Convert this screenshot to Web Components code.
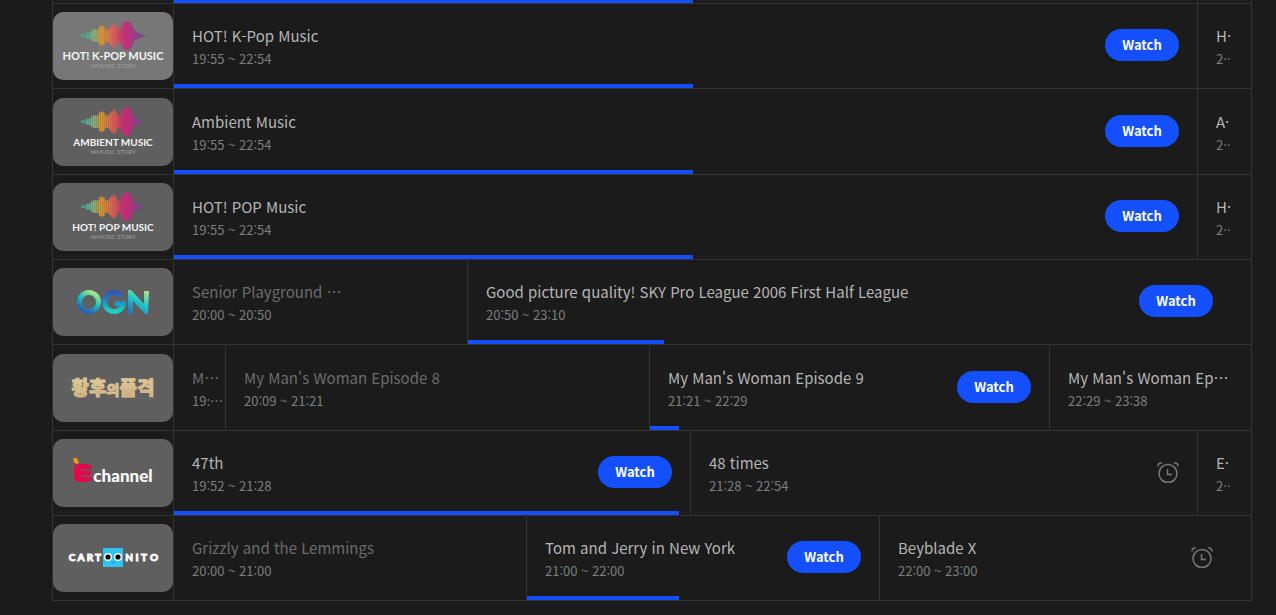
<!DOCTYPE html>
<html lang="ko">
<head>
<meta charset="utf-8">
<title>TV guide</title>
<style>
  body {
    margin: 0;
    padding: 0 24px 12px 52px;
    background: #1b1b1b;
    color: #b5b5b5;
    font-family: "Noto Sans CJK KR", "Noto Sans", sans-serif;
  }
</style>
</head>
<body>
<tv-guide>
  <tv-row peek>
    <tv-show span="1024" progress="507"></tv-show>
    <tv-show span="53"></tv-show>
  </tv-row>
  <tv-row>
    <channel-logo slot="logo" kind="wave" name="HOT! K-POP MUSIC" size="11" light></channel-logo>
    <tv-show span="1024" progress="507" name="HOT! K-Pop Music" time="19:55 ~ 22:54" action="watch"></tv-show>
    <tv-show span="53" name="H·" time="2··"></tv-show>
  </tv-row>
  <tv-row>
    <channel-logo slot="logo" kind="wave" name="AMBIENT MUSIC" size="10"></channel-logo>
    <tv-show span="1024" progress="507" name="Ambient Music" time="19:55 ~ 22:54" action="watch"></tv-show>
    <tv-show span="53" name="A·" time="2··"></tv-show>
  </tv-row>
  <tv-row>
    <channel-logo slot="logo" kind="wave" name="HOT! POP MUSIC" size="10"></channel-logo>
    <tv-show span="1024" progress="507" name="HOT! POP Music" time="19:55 ~ 22:54" action="watch"></tv-show>
    <tv-show span="53" name="H·" time="2··"></tv-show>
  </tv-row>
  <tv-row>
    <channel-logo slot="logo" kind="ogn"></channel-logo>
    <tv-show span="294" name="Senior Playground …" time="20:00 ~ 20:50" past></tv-show>
    <tv-show span="783" progress="250" name="Good picture quality! SKY Pro League 2006 First Half League" time="20:50 ~ 23:10" action="watch" open></tv-show>
  </tv-row>
  <tv-row>
    <channel-logo slot="logo" kind="empress"></channel-logo>
    <tv-show span="52" name="M…" time="19:…" past></tv-show>
    <tv-show span="424" name="My Man's Woman Episode 8" time="20:09 ~ 21:21" past></tv-show>
    <tv-show span="400" progress="73" name="My Man's Woman Episode 9" time="21:21 ~ 22:29" action="watch"></tv-show>
    <tv-show span="201" name="My Man's Woman Ep…" time="22:29 ~ 23:38"></tv-show>
  </tv-row>
  <tv-row>
    <channel-logo slot="logo" kind="echannel"></channel-logo>
    <tv-show span="517" progress="978" name="47th" time="19:52 ~ 21:28" action="watch"></tv-show>
    <tv-show span="507" name="48 times" time="21:28 ~ 22:54" action="alarm"></tv-show>
    <tv-show span="53" name="E·" time="2··"></tv-show>
  </tv-row>
  <tv-row>
    <channel-logo slot="logo" kind="cartoonito"></channel-logo>
    <tv-show span="353" name="Grizzly and the Lemmings" time="20:00 ~ 21:00" past></tv-show>
    <tv-show span="353" progress="431" name="Tom and Jerry in New York" time="21:00 ~ 22:00" action="watch"></tv-show>
    <tv-show span="371" name="Beyblade X" time="22:00 ~ 23:00" action="alarm" open></tv-show>
  </tv-row>
</tv-guide>

<script>
const lineColor = '#333333';
const accentColor = '#1450ff';

// waveform bars: x, half height, color
const waveBars = [
  [28, 1, '#4fa590'], [30, 1, '#4fa590'], [32, 2, '#4fa590'], [34, 3, '#55ab92'], [36, 3, '#62ad90'],
  [38, 5, '#7aae8a'], [40, 6, '#86ab80'], [42, 6, '#93a678'], [44, 6, '#b09d53'],
  [46, 9, '#cf9a34'], [48, 10, '#dc9526'], [50, 9, '#dd8b2c'], [52, 6, '#d98338'],
  [54, 6, '#d87b42'], [56, 8, '#dd7048'], [58, 10, '#e1624e'], [60, 12, '#e45752'], [62, 10, '#df5058'],
  [64, 6, '#d54660'], [66, 6, '#d03c68'], [68, 10, '#d0316e'], [70, 13, '#d02a74'],
  [72, 14, '#d12578'], [74, 14, '#cb257b'], [76, 13, '#c2287d'], [78, 10, '#b42d80'], [80, 6, '#a53283'],
  [82, 4, '#943887'], [84, 3, '#853f89'], [86, 2, '#7c4688'], [88, 1, '#755085'], [90, 1, '#6f5583'],
];

const logos = {
  wave: (name, size) => `
    ${waveBars.map(([x, h, c]) => `
      <rect x="${x}" y="${24 - h}" width="2" height="${h * 2}" fill="${c}" opacity=".5"/>
      <rect x="${x}" y="${23 - h}" width="1.4" height="${h * 2 + 1}" rx=".7" fill="${c}"/>`).join('')}
    <text x="60" y="48" font-family="Lato" font-weight="700" font-size="${size}" fill="#f5f5f5">${name}</text>
    <text x="60" y="56" font-family="Lato" font-size="6" fill="#a0a0a0">WMUSIC STORY</text>`,
  ogn: () => `
    <defs>
      <linearGradient id="o" x1=".8" y1="0" x2=".3" y2="1"><stop offset="0" stop-color="#b5e583"/><stop offset=".45" stop-color="#1bc4c5"/><stop offset="1" stop-color="#2b5db5"/></linearGradient>
      <linearGradient id="g" x1=".5" y1="0" x2=".5" y2="1"><stop offset="0" stop-color="#2d57b2"/><stop offset=".45" stop-color="#1d8bc3"/><stop offset="1" stop-color="#19d4c5"/></linearGradient>
      <linearGradient id="n" x1=".3" y1="1" x2=".8" y2="0"><stop offset="0" stop-color="#2d75c2"/><stop offset=".5" stop-color="#1ec9c9"/><stop offset="1" stop-color="#b5e582"/></linearGradient>
    </defs>
    <g fill="none" stroke-width="5">
      <circle cx="36" cy="34" r="9.5" stroke="url(#o)"/>
      <path d="M68.500 28a9.500 9.500 0 1 0 2 7.500H62" stroke="url(#g)"/>
    </g>
    <path d="M75 46V22h3l13 14V23h5l-1 23h-3L80 33v13z" fill="url(#n)"/>`,
  empress: () => `
    <defs><linearGradient id="k" x1="0" y1="0" x2="0" y2="1"><stop offset="0" stop-color="#e3cf9f"/><stop offset="1" stop-color="#cda874"/></linearGradient></defs>
    <text x="60" y="41" font-family="Noto Sans CJK KR" font-weight="900" font-size="19" fill="url(#k)" stroke="#dcc394" stroke-width=".8">황후<tspan font-size="14">의</tspan>품격</text>`,
  echannel: () => `
    <path d="M20 20q3-3 5 1l1 3-3 1q-3-2-3-5z" fill="#f39a12"/>
    <rect x="21" y="25" width="17" height="18" rx="5" fill="#e5074c"/>
    <path d="M28 31h10M28 37h10" stroke="#5f5f5f" stroke-width="1.500"/>
    <path d="M38 26v4M38 38v5" stroke="#e5074c"/>
    <text x="70" y="43" font-family="Lato" font-weight="900" font-size="17" fill="#ffffff">channel</text>`,
  cartoonito: () => `
    <rect x="50" y="24" width="20" height="19" fill="#2fc4f0"/>
    <circle cx="55" cy="33" r="4" fill="#fff"/><circle cx="65" cy="33" r="4" fill="#fff"/>
    <circle cx="55" cy="33" r="2.600" fill="#000"/><circle cx="65" cy="33" r="2.600" fill="#000"/>
    <path d="M58 38q2 2 4 0" fill="none" stroke="#2a7fd0"/>
    <g font-family="Lato" font-weight="900" font-size="10" fill="#fff" stroke="#fff" stroke-width=".8">
      <text x="19 28 37 45" y="37">CART</text><text x="76 84 91 101" y="37">NITO</text>
    </g>`,
};

class TvGuide extends HTMLElement {
  constructor() {
    super();
    this.attachShadow({ mode: 'open' }).innerHTML = `
      <style>
        :host {
          display: block;
          border: 1px solid ${lineColor};
          border-width: 0 1px;
        }
        ::slotted(tv-row) { height: 84px; }
        /* three rows share 256px */
        ::slotted(tv-row:nth-child(3n)) { height: 85px; }
        ::slotted(tv-row[peek]) { height: 3px; }
      </style>
      <slot></slot>
    `;
  }
}

class TvRow extends HTMLElement {
  connectedCallback() {
    if (this.shadowRoot) return;
    this.attachShadow({ mode: 'open' }).innerHTML = `
      <style>
        :host {
          display: flex;
          border-bottom: 1px solid ${lineColor};
        }
        .logo {
          flex: none;
          display: flex;
          align-items: flex-end;
          width: 120px;
          padding-bottom: 8px;
          border-right: 1px solid ${lineColor};
        }
        :host([peek]) .logo { padding: 0; }
        .shows {
          flex: 1;
          display: grid;
          min-width: 0;
        }
      </style>
      <div class="logo"><slot name="logo"></slot></div>
      <div class="shows"><slot></slot></div>
    `;
    this._setColumns();
    this.shadowRoot.querySelector('.shows slot').addEventListener('slotchange', () => this._setColumns());
  }

  // one column per show, as wide as its share of the timeline
  _setColumns() {
    const shows = [...this.querySelectorAll('tv-show')];
    this.shadowRoot.querySelector('.shows').style.gridTemplateColumns =
      shows.map((show) => `minmax(0, ${show.getAttribute('span')}fr)`).join(' ');
  }
}

class ChannelLogo extends HTMLElement {
  connectedCallback() {
    if (this.shadowRoot) return;
    const draw = logos[this.getAttribute('kind')];
    this.attachShadow({ mode: 'open' }).innerHTML = `
      <style>
        :host {
          display: block;
          height: 68px;
          border-radius: 10px;
          background: #5f5f5f;
        }
        :host([light]) { background: #777777; }
        svg { display: block; }
        text { text-anchor: middle; }
      </style>
      <svg width="120" height="68" viewBox="0 0 120 68">${draw(this.getAttribute('name'), this.getAttribute('size'))}</svg>
    `;
  }
}

class TvShow extends HTMLElement {
  connectedCallback() {
    if (this.shadowRoot) return;
    const name = this.getAttribute('name');
    const progress = this.getAttribute('progress');
    this.attachShadow({ mode: 'open' }).innerHTML = `
      <style>
        :host {
          position: relative;
          display: flex;
          align-items: center;
          min-width: 0;
          padding: 0 18px 2px 18px;
          border-right: 1px solid ${lineColor};
        }
        :host(:last-child) { border-right: 0; }
        :host([past]) { padding-right: 0; }
        :host([open]) { padding-right: 38px; }
        :host(:not([name])) { padding: 0; }
        .info {
          flex: 1;
          min-width: 0;
          padding-top: 4px;
        }
        .name, .time {
          overflow: hidden;
          white-space: nowrap;
          text-overflow: ellipsis;
        }
        .name {
          font-size: 15px;
          line-height: 24px;
        }
        .time {
          font-size: 13px;
          line-height: 22px;
          color: #7d7d7d;
        }
        :host([past]) .name { color: #6b6b6b; }
        .bar {
          position: absolute;
          left: 0;
          bottom: 0;
          height: 4px;
          background: ${accentColor};
        }
      </style>
      ${name ? `<div class="info"><div class="name">${name}</div><div class="time">${this.getAttribute('time')}</div></div>` : ''}
      ${this._action()}
      ${progress ? `<div class="bar" style="width: ${progress / 10}%"></div>` : ''}
    `;
  }

  _action() {
    switch (this.getAttribute('action')) {
      case 'watch': return '<watch-button>Watch</watch-button>';
      case 'alarm': return '<alarm-button></alarm-button>';
      default: return '';
    }
  }
}

class WatchButton extends HTMLElement {
  constructor() {
    super();
    this.attachShadow({ mode: 'open' }).innerHTML = `
      <style>
        :host { display: block; flex: none; }
        button {
          display: block;
          width: 74px;
          height: 32px;
          padding: 0;
          border: 0;
          border-radius: 16px;
          background: ${accentColor};
          color: #ffffff;
          font: 700 13px/32px "Noto Sans CJK KR", "Noto Sans", sans-serif;
          cursor: pointer;
        }
      </style>
      <button type="button"><slot></slot></button>
    `;
  }
}

class AlarmButton extends HTMLElement {
  constructor() {
    super();
    this.attachShadow({ mode: 'open' }).innerHTML = `
      <style>
        :host { display: block; flex: none; }
        button {
          display: block;
          padding: 0;
          border: 0;
          background: none;
          color: #777777;
          cursor: pointer;
        }
        svg { display: block; }
      </style>
      <button type="button" aria-label="Set reminder">
        <svg width="22" height="22" viewBox="0 0 22 22" fill="none" stroke="currentColor" stroke-width="1.500">
          <circle cx="11" cy="12.500" r="9"/>
          <path d="M10.500 8v5.500H15M1 5.500q0-4 4-3.500M21 5.500q0-4-4-3.500"/>
        </svg>
      </button>
    `;
  }
}

customElements.define('watch-button', WatchButton);
customElements.define('alarm-button', AlarmButton);
customElements.define('channel-logo', ChannelLogo);
customElements.define('tv-show', TvShow);
customElements.define('tv-row', TvRow);
customElements.define('tv-guide', TvGuide);
</script>
</body>
</html>
